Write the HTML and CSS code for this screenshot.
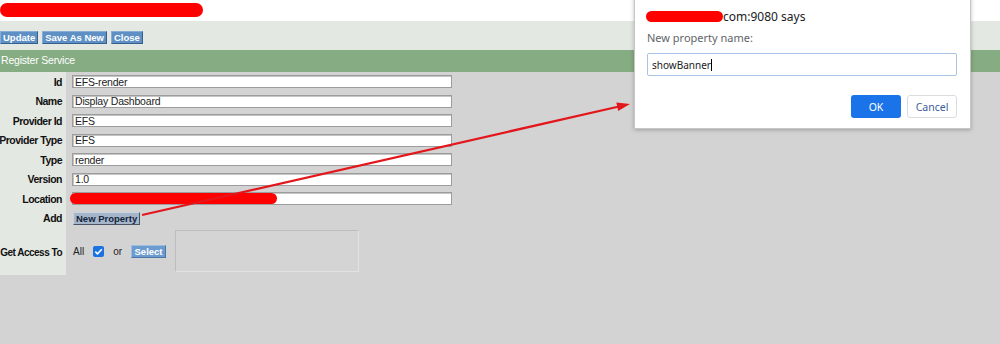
FILE: index.html
```html
<!DOCTYPE html>
<html lang="en">
<head>
    <meta charset="UTF-8">
    <title>Register Service</title>
    <link rel="stylesheet" href="styles.css">
</head>
<body>
    <div class="topbar"><span class="redact redact-title"></span></div>

    <div class="toolbar">
        <button class="tb-btn">Update</button>
        <button class="tb-btn">Save As New</button>
        <button class="tb-btn">Close</button>
    </div>

    <div class="section-head">Register Service</div>

    <div class="form">
        <div class="row">
            <div class="lbl">Id</div>
            <div class="field"><input class="txt" value="EFS-render"></div>
        </div>
        <div class="row">
            <div class="lbl">Name</div>
            <div class="field"><input class="txt" value="Display Dashboard"></div>
        </div>
        <div class="row">
            <div class="lbl">Provider Id</div>
            <div class="field"><input class="txt" value="EFS"></div>
        </div>
        <div class="row">
            <div class="lbl">Provider Type</div>
            <div class="field"><input class="txt" value="EFS"></div>
        </div>
        <div class="row">
            <div class="lbl">Type</div>
            <div class="field"><input class="txt" value="render"></div>
        </div>
        <div class="row">
            <div class="lbl">Version</div>
            <div class="field"><input class="txt" value="1.0"></div>
        </div>
        <div class="row">
            <div class="lbl">Location</div>
            <div class="field field-location">
                <input class="txt" value="">
                <span class="redact redact-location"></span>
            </div>
        </div>
        <div class="row">
            <div class="lbl">Add</div>
            <div class="field"><button class="add-btn">New Property</button></div>
        </div>
        <div class="row row-access">
            <div class="lbl">Get Access To</div>
            <div class="field">
                <span class="plain">All</span>
                <span class="check">
                    <svg width="11" height="11" viewBox="0 0 11 11"><polyline points="2.3,5.6 4.5,7.8 8.8,3.2" fill="none" stroke="#fff" stroke-width="1.6"/></svg>
                </span>
                <span class="plain plain-or">or</span>
                <button class="tb-btn select-btn">Select</button>
                <div class="access-box"></div>
            </div>
        </div>
    </div>

    <svg class="arrow" width="1000" height="344" viewBox="0 0 1000 344">
        <line x1="142" y1="215" x2="619" y2="106.5" stroke="#e3161c" stroke-width="2.2"/>
        <polygon points="630,104 618.2,111 616.3,102.4" fill="#e3161c"/>
    </svg>

    <div class="prompt">
        <div class="prompt-title"><span class="redact redact-host"></span>com:9080 says</div>
        <div class="prompt-msg">New property name:</div>
        <div class="prompt-input">showBanner<span class="caret"></span></div>
        <div class="prompt-actions">
            <button class="pbtn pbtn-ok">OK</button>
            <button class="pbtn pbtn-cancel">Cancel</button>
        </div>
    </div>
</body>
</html>
```

FILE: styles.css
```css
* {
    margin: 0;
    padding: 0;
    box-sizing: border-box;
}

body {
    background-color: #d3d3d3;
    font-family: 'Liberation Sans', Tahoma, Arial, sans-serif;
    font-size: 10px;
    color: #111;
    width: 1000px;
    height: 344px;
    overflow: hidden;
    position: relative;
}

.redact {
    display: inline-block;
    background: #ff0000;
    border-radius: 7px;
}

.topbar {
    height: 21px;
    background: #fff;
    padding-top: 3px;
}

.redact-title {
    width: 203px;
    height: 14px;
    display: block;
}

.toolbar {
    height: 29px;
    background: #e4e8e2;
    padding-top: 10px;
    display: flex;
    align-items: flex-start;
    gap: 4px;
}

.tb-btn {
    height: 13px;
    padding: 0 2px;
    background: #5e90c5;
    color: #fff;
    font-family: 'Liberation Sans', Tahoma, sans-serif;
    font-size: 9.5px;
    font-weight: bold;
    line-height: 11px;
    border: 1px solid;
    border-color: #88acd4 #35608e #35608e #88acd4;
}

.section-head {
    height: 22px;
    background: #86ac83;
    color: #fff;
    font-size: 10.5px;
    letter-spacing: -0.2px;
    line-height: 21px;
    padding-left: 1px;
}

.row {
    display: flex;
    height: 19.5px;
}

.lbl {
    width: 66px;
    flex: none;
    background: #e4e8e2;
    display: flex;
    align-items: center;
    justify-content: flex-end;
    padding-right: 4px;
    font-size: 10.5px;
    font-weight: bold;
    letter-spacing: -0.5px;
    white-space: nowrap;
}

.field {
    display: flex;
    align-items: center;
    padding-left: 6px;
}

.field-location {
    position: relative;
}

.txt {
    width: 380px;
    height: 13px;
    border: 1px solid #9c9c9c;
    box-shadow: inset 1px 1px 0 #c4c4c4;
    background: #fff;
    padding: 0 2px;
    font-family: 'Liberation Sans', Tahoma, sans-serif;
    font-size: 10.5px;
    letter-spacing: -0.2px;
    color: #222;
    outline: none;
}

.redact-location {
    position: absolute;
    left: 4px;
    top: 3.5px;
    width: 207px;
    height: 11px;
    border-radius: 6px;
}

.add-btn {
    height: 13px;
    padding: 0 2px;
    margin-left: 1px;
    background: #a6b6ca;
    color: #14243a;
    font-family: 'Liberation Sans', Tahoma, sans-serif;
    font-size: 9.5px;
    font-weight: bold;
    line-height: 11px;
    border: 1px solid;
    border-color: #c9d3de #4a5563 #4a5563 #c9d3de;
}

.row-access {
    height: 47px;
    padding: 2px 0 3px;
    background: linear-gradient(to right, #e4e8e2 66px, transparent 66px);
}

.row-access .lbl {
    background: none;
    padding-top: 2px;
    font-size: 10px;
}

.plain {
    margin-left: 1px;
    color: #222;
    font-size: 10px;
}

.check {
    display: flex;
    width: 11px;
    height: 11px;
    margin-left: 9px;
    background: #1b73e2;
    border-radius: 2px;
}

.plain-or {
    margin-left: 9px;
}

.select-btn {
    margin-left: 9px;
    width: 35px;
    background: #6c9ccf;
    border-color: #9dbde0 #4a77a8 #4a77a8 #9dbde0;
}

.access-box {
    width: 184px;
    height: 42px;
    margin-left: 9px;
    border: 1px solid #bdbdbd;
    border-right-color: #e2e2e2;
    border-bottom-color: #e2e2e2;
    background: #d4d4d4;
}

.arrow {
    position: absolute;
    left: 0;
    top: 0;
    pointer-events: none;
}

.prompt {
    position: absolute;
    left: 634px;
    top: -4px;
    width: 337px;
    height: 133px;
    background: #fff;
    border: 1px solid #c6c6c6;
    box-shadow: 0 1px 4px rgba(0, 0, 0, 0.25);
    padding: 13px 13px 0 11px;
    font-family: 'Noto Sans', 'Open Sans', sans-serif;
}

.prompt-title {
    display: flex;
    align-items: center;
    height: 12px;
    font-size: 12px;
    color: #202124;
}

.redact-host {
    width: 77px;
    height: 11px;
    border-radius: 6px;
}

.prompt-msg {
    margin-top: 9px;
    font-size: 11px;
    color: #5f6368;
    line-height: 14px;
    padding-left: 1px;
}

.prompt-input {
    margin-top: 8px;
    margin-left: 1px;
    height: 23px;
    border: 1px solid #a8c3e3;
    border-radius: 2px;
    display: flex;
    align-items: center;
    padding-left: 4px;
    font-size: 10px;
    color: #202124;
}

.caret {
    display: inline-block;
    width: 1px;
    height: 12px;
    background: #000;
}

.prompt-actions {
    display: flex;
    justify-content: flex-end;
    gap: 6px;
    margin-top: 19px;
}

.pbtn {
    width: 50px;
    height: 23px;
    border-radius: 3px;
    font-family: 'Noto Sans', 'Open Sans', sans-serif;
    font-size: 10.5px;
}

.pbtn-ok {
    background: #1a73e8;
    color: #fff;
    border: none;
}

.pbtn-cancel {
    background: #fff;
    color: #3c5d9a;
    border: 1px solid #dadce0;
}
```
